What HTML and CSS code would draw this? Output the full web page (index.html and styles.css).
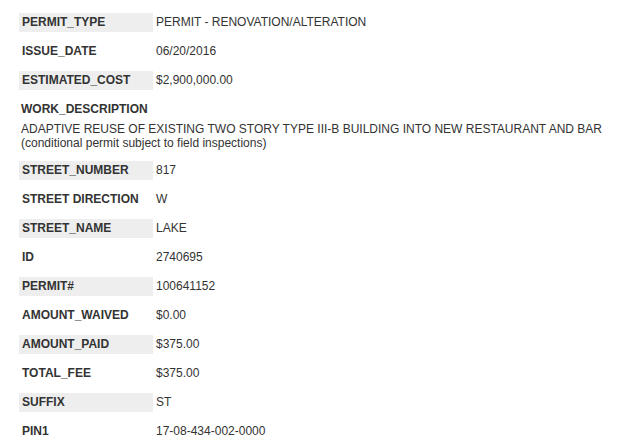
FILE: index.html
```html
<!DOCTYPE html>
<html>
<head>
<meta charset="utf-8">
<link rel="stylesheet" href="styles.css">
</head>
<body>
<div class="record">
  <div class="row shaded"><div class="label">PERMIT_TYPE</div><div class="value">PERMIT - RENOVATION/ALTERATION</div></div>
  <div class="row"><div class="label">ISSUE_DATE</div><div class="value">06/20/2016</div></div>
  <div class="row shaded"><div class="label">ESTIMATED_COST</div><div class="value">$2,900,000.00</div></div>
  <div class="block">
    <div class="label">WORK_DESCRIPTION</div>
    <div class="desc">ADAPTIVE REUSE OF EXISTING TWO STORY TYPE III-B BUILDING INTO NEW RESTAURANT AND BAR<br>(conditional permit subject to field inspections)</div>
  </div>
  <div class="row shaded"><div class="label">STREET_NUMBER</div><div class="value">817</div></div>
  <div class="row"><div class="label">STREET DIRECTION</div><div class="value">W</div></div>
  <div class="row shaded"><div class="label">STREET_NAME</div><div class="value">LAKE</div></div>
  <div class="row"><div class="label">ID</div><div class="value">2740695</div></div>
  <div class="row shaded"><div class="label">PERMIT#</div><div class="value">100641152</div></div>
  <div class="row"><div class="label">AMOUNT_WAIVED</div><div class="value">$0.00</div></div>
  <div class="row shaded"><div class="label">AMOUNT_PAID</div><div class="value">$375.00</div></div>
  <div class="row"><div class="label">TOTAL_FEE</div><div class="value">$375.00</div></div>
  <div class="row shaded"><div class="label">SUFFIX</div><div class="value">ST</div></div>
  <div class="row"><div class="label">PIN1</div><div class="value">17-08-434-002-0000</div></div>
</div>
</body>
</html>
```
FILE: styles.css
```css
html, body {
  margin: 0;
  padding: 0;
  background: #fff;
}
body {
  font-family: "Liberation Sans", Arial, sans-serif;
  font-size: 12px;
  color: #333;
}
.record {
  padding: 13px 0 0 19px;
  display: flex;
  flex-direction: column;
  gap: 10px;
}
.row {
  display: flex;
  height: 19px;
  line-height: 19px;
}
.row .label {
  width: 134px;
  padding-left: 3px;
  box-sizing: border-box;
  font-weight: bold;
}
.row.shaded .label {
  background: #eee;
}
.row .value {
  padding-left: 3px;
}
.block .label {
  font-weight: bold;
  padding-left: 2px;
  line-height: 19px;
  height: 19px;
}
.block .desc {
  margin-top: 3px;
  padding-left: 2px;
  line-height: 14px;
  margin-bottom: 1px;
}
```
